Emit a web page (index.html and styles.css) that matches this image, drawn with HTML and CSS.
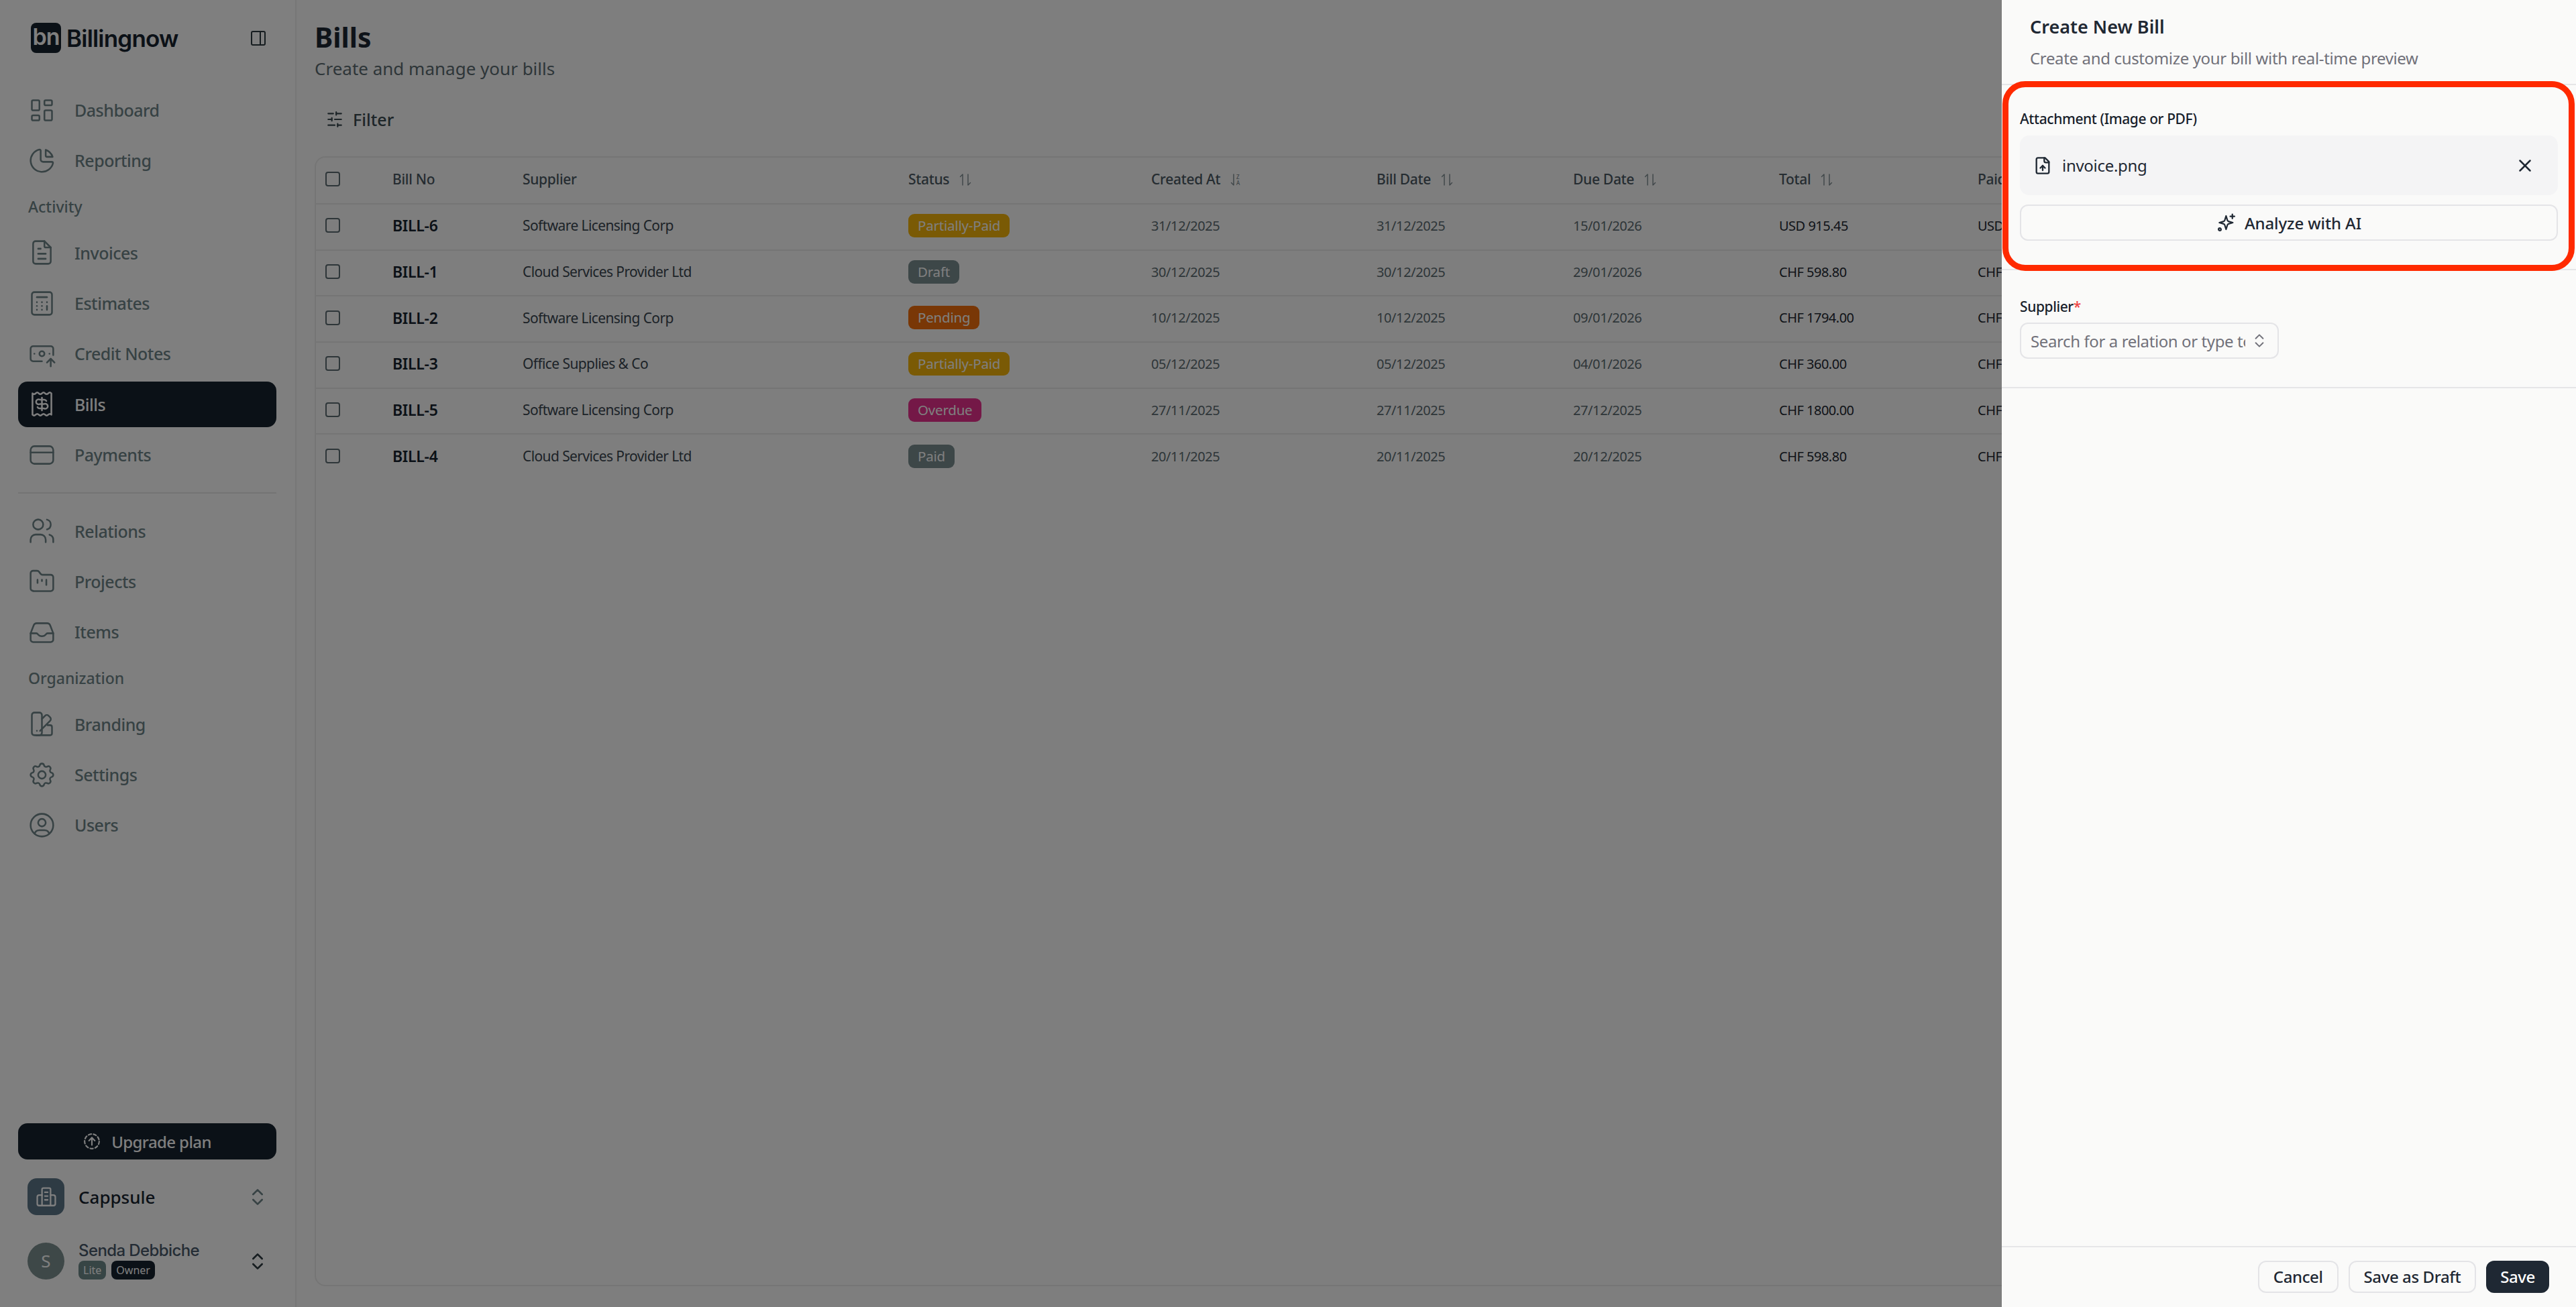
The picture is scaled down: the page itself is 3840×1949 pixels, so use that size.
FILE: index.html
```html
<!DOCTYPE html>
<html>
    <head>
        <title>Bills</title>
        <link rel="stylesheet" href="styles.css">
    </head>
    <body>
        <div class="app">
            <aside class="sidebar">
                <div class="brand">
                    <span class="brand-mark">bn</span>
                    <span class="brand-name">Billingnow</span>
                    <svg class="brand-toggle" viewBox="0 0 22 22"><rect x="1" y="1" width="20" height="20" rx="2"/><path d="M14 1v20"/></svg>
                </div>

                <nav class="nav">
                    <a class="nav-item"><svg class="icon" viewBox="0 0 24 24"><path d="M5 4h4a1 1 0 0 1 1 1v6a1 1 0 0 1 -1 1h-4a1 1 0 0 1 -1 -1v-6a1 1 0 0 1 1 -1"/><path d="M5 16h4a1 1 0 0 1 1 1v2a1 1 0 0 1 -1 1h-4a1 1 0 0 1 -1 -1v-2a1 1 0 0 1 1 -1"/><path d="M15 12h4a1 1 0 0 1 1 1v6a1 1 0 0 1 -1 1h-4a1 1 0 0 1 -1 -1v-6a1 1 0 0 1 1 -1"/><path d="M15 4h4a1 1 0 0 1 1 1v2a1 1 0 0 1 -1 1h-4a1 1 0 0 1 -1 -1v-2a1 1 0 0 1 1 -1"/></svg>Dashboard</a>
                    <a class="nav-item"><svg class="icon" viewBox="0 0 24 24"><path d="M10 3.2a9 9 0 1 0 10.8 10.8a1 1 0 0 0 -1 -1h-6.8a2 2 0 0 1 -2 -2v-7a.9 .9 0 0 0 -1 -.8"/><path d="M15 3.5a9 9 0 0 1 5.5 5.5h-4.5a1 1 0 0 1 -1 -1v-4.5"/></svg>Reporting</a>
                    <div class="nav-label">Activity</div>
                    <a class="nav-item"><svg class="icon" viewBox="0 0 24 24"><path d="M14 3v4a1 1 0 0 0 1 1h4"/><path d="M17 21h-10a2 2 0 0 1 -2 -2v-14a2 2 0 0 1 2 -2h7l5 5v11a2 2 0 0 1 -2 2z"/><path d="M9 9h2"/><path d="M9 13h6"/><path d="M9 17h6"/></svg>Invoices</a>
                    <a class="nav-item"><svg class="icon" viewBox="0 0 24 24"><path d="M4 5a2 2 0 0 1 2 -2h12a2 2 0 0 1 2 2v14a2 2 0 0 1 -2 2h-12a2 2 0 0 1 -2 -2z"/><path d="M8 7h8"/><path d="M8 11v.01"/><path d="M12 11v.01"/><path d="M16 11v.01"/><path d="M8 14v.01"/><path d="M12 14v.01"/><path d="M16 14v3"/><path d="M8 17v.01"/><path d="M12 17v.01"/></svg>Estimates</a>
                    <a class="nav-item"><svg class="icon" viewBox="0 0 24 24"><path d="M12 12m-2 0a2 2 0 1 0 4 0a2 2 0 1 0 -4 0"/><path d="M12 18h-7a2 2 0 0 1 -2 -2v-8a2 2 0 0 1 2 -2h14a2 2 0 0 1 2 2v5"/><path d="M19 22v-6"/><path d="M22 19l-3 -3l-3 3"/><path d="M6 12h.01"/><path d="M18 12h.01"/></svg>Credit Notes</a>
                    <a class="nav-item active"><svg class="icon" viewBox="0 0 24 24"><path d="M4.5 3.5q1.25 1.3 2.5 0t2.5 0t2.5 0t2.5 0t2.5 0t2.5 0v17q-1.25 -1.3 -2.5 0t-2.5 0t-2.5 0t-2.5 0t-2.5 0t-2.5 0z"/><path d="M15.5 9.5a2 2 0 0 0 -1.8 -1h-3.4a2 2 0 1 0 0 3.5h3.4a2 2 0 1 1 0 3.5h-3.4a2 2 0 0 1 -1.8 -1"/><path d="M12 7v10"/></svg>Bills</a>
                    <a class="nav-item"><svg class="icon" viewBox="0 0 24 24"><path d="M3 8a3 3 0 0 1 3 -3h12a3 3 0 0 1 3 3v8a3 3 0 0 1 -3 3h-12a3 3 0 0 1 -3 -3z"/><path d="M3 10h18"/></svg>Payments</a>
                    <div class="nav-divider"></div>
                    <a class="nav-item"><svg class="icon" viewBox="0 0 24 24"><path d="M9 7m-4 0a4 4 0 1 0 8 0a4 4 0 1 0 -8 0"/><path d="M3 21v-2a4 4 0 0 1 4 -4h4a4 4 0 0 1 4 4v2"/><path d="M16 3.13a4 4 0 0 1 0 7.75"/><path d="M21 21v-2a4 4 0 0 0 -3 -3.85"/></svg>Relations</a>
                    <a class="nav-item"><svg class="icon" viewBox="0 0 24 24"><path d="M5 20h14a2 2 0 0 0 2 -2v-9a2 2 0 0 0 -2 -2h-6.5a2 2 0 0 1 -1.6 -.8l-1.2 -1.6a2 2 0 0 0 -1.6 -.8h-3.100a2 2 0 0 0 -2 2v12a2 2 0 0 0 2 2z"/><path d="M8.500 11v2.500"/><path d="M12 11v1"/><path d="M15.500 11v4"/></svg>Projects</a>
                    <a class="nav-item"><svg class="icon" viewBox="0 0 24 24"><path d="M3 13l2.500 -6.500a2.500 2.500 0 0 1 2.300 -1.500h8.400a2.500 2.500 0 0 1 2.300 1.500l2.500 6.500v5a2 2 0 0 1 -2 2h-14a2 2 0 0 1 -2 -2z"/><path d="M3 13h4.500a1.500 1.500 0 0 1 1.200 .7c1.800 2.200 4.800 2.200 6.600 0a1.500 1.500 0 0 1 1.200 -.7h4.500"/></svg>Items</a>
                    <div class="nav-label">Organization</div>
                    <a class="nav-item"><svg class="icon" viewBox="0 0 24 24"><path d="M7 3h3a2 2 0 0 1 2 2v14a2 2 0 0 1 -2 2h-4a2 2 0 0 1 -2 -2v-14a2 2 0 0 1 2 -2z"/><path d="M12 8l2.500 -2.500a2 2 0 0 1 2.800 0l1.200 1.200a2 2 0 0 1 0 2.800l-8 8"/><path d="M16.500 13h2a1.500 1.500 0 0 1 1.500 1.500v5a1.500 1.500 0 0 1 -1.500 1.500h-11"/><path d="M8 17.500v.01"/></svg>Branding</a>
                    <a class="nav-item"><svg class="icon" viewBox="0 0 24 24"><path d="M10.325 4.317c.426 -1.756 2.924 -1.756 3.35 0a1.724 1.724 0 0 0 2.573 1.066c1.543 -.94 3.31 .826 2.37 2.37a1.724 1.724 0 0 0 1.065 2.572c1.756 .426 1.756 2.924 0 3.35a1.724 1.724 0 0 0 -1.066 2.573c.94 1.543 -.826 3.31 -2.37 2.37a1.724 1.724 0 0 0 -2.572 1.065c-.426 1.756 -2.924 1.756 -3.35 0a1.724 1.724 0 0 0 -2.573 -1.066c-1.543 .94 -3.31 -.826 -2.37 -2.37a1.724 1.724 0 0 0 -1.065 -2.572c-1.756 -.426 -1.756 -2.924 0 -3.35a1.724 1.724 0 0 0 1.066 -2.573c-.94 -1.543 .826 -3.31 2.37 -2.37c1 .608 2.296 .07 2.572 -1.065z"/><path d="M9 12a3 3 0 1 0 6 0a3 3 0 0 0 -6 0"/></svg>Settings</a>
                    <a class="nav-item"><svg class="icon" viewBox="0 0 24 24"><path d="M12 12m-9 0a9 9 0 1 0 18 0a9 9 0 1 0 -18 0"/><path d="M12 10m-3 0a3 3 0 1 0 6 0a3 3 0 1 0 -6 0"/><path d="M6.168 18.849a4 4 0 0 1 3.832 -2.849h4a4 4 0 0 1 3.834 2.855"/></svg>Users</a>
                </nav>

                <div class="side-footer">
                    <a class="upgrade"><svg class="upgrade-icon" viewBox="0 0 24 24"><circle class="dashed" cx="12" cy="12" r="10"/><path d="M12 17v-10"/><path d="M8 11l4 -4l4 4"/></svg>Upgrade plan</a>
                    <div class="account org">
                        <span class="org-mark"><svg viewBox="0 0 24 24"><path d="M7.500 21v-17a1.500 1.500 0 0 1 1.500 -1.500h6a1.500 1.500 0 0 1 1.500 1.500v17z"/><path d="M7.500 10h-3a2 2 0 0 0 -2 2v7a2 2 0 0 0 2 2h3"/><path d="M16.500 10h3a2 2 0 0 1 2 2v7a2 2 0 0 1 -2 2h-3"/><path d="M10.500 7h3"/><path d="M10.500 11h3"/><path d="M10.500 15h3"/></svg></span>
                        <span class="org-name">Cappsule</span>
                        <svg class="updown" viewBox="0 0 24 24"><path d="M7 15l5 5l5 -5"/><path d="M7 9l5 -5l5 5"/></svg>
                    </div>
                    <div class="account user">
                        <span class="avatar">S</span>
                        <div class="user-info">
                            <div class="user-name">Senda Debbiche</div>
                            <div class="user-tags"><span class="tag tag-lite">Lite</span><span class="tag tag-owner">Owner</span></div>
                        </div>
                        <svg class="updown" viewBox="0 0 24 24"><path d="M7 15l5 5l5 -5"/><path d="M7 9l5 -5l5 5"/></svg>
                    </div>
                </div>
            </aside>

            <main class="main">
                <h1 class="page-title">Bills</h1>
                <p class="page-sub">Create and manage your bills</p>
                <a class="filter"><svg viewBox="0 0 24 24"><path d="M21 4h-7"/><path d="M10 4h-7"/><path d="M21 12h-9"/><path d="M8 12h-5"/><path d="M21 20h-5"/><path d="M12 20h-9"/><path d="M14 2v4"/><path d="M8 10v4"/><path d="M16 18v4"/></svg>Filter</a>

                <div class="table-card">
                    <table class="bills">
                        <thead>
                            <tr>
                                <th class="col-check"><span class="check"></span></th>
                                <th class="col-no">Bill No</th>
                                <th class="col-supplier">Supplier</th>
                                <th class="col-status">Status<svg class="sort" viewBox="0 0 20 20"><path d="M6 18v-16l-3.500 3.500"/><path d="M14 2v16l3.500 -3.500"/></svg></th>
                                <th class="col-created">Created At<svg class="sort" viewBox="0 0 20 20"><path d="M6 2v16l-3.500 -3.500"/><text class="sort-letter" x="10" y="9">Z</text><text class="sort-letter" x="10" y="18">A</text></svg></th>
                                <th class="col-date">Bill Date<svg class="sort" viewBox="0 0 20 20"><path d="M6 18v-16l-3.500 3.500"/><path d="M14 2v16l3.500 -3.500"/></svg></th>
                                <th class="col-due">Due Date<svg class="sort" viewBox="0 0 20 20"><path d="M6 18v-16l-3.500 3.500"/><path d="M14 2v16l3.500 -3.500"/></svg></th>
                                <th class="col-total">Total<svg class="sort" viewBox="0 0 20 20"><path d="M6 18v-16l-3.500 3.500"/><path d="M14 2v16l3.500 -3.500"/></svg></th>
                                <th>Paid</th>
                            </tr>
                        </thead>
                        <tbody>
                            <tr>
                                <td><span class="check"></span></td>
                                <td class="bill-no">BILL-6</td>
                                <td class="supplier">Software Licensing Corp</td>
                                <td><span class="badge partial">Partially-Paid</span></td>
                                <td class="date">31/12/2025</td>
                                <td class="date">31/12/2025</td>
                                <td class="date">15/01/2026</td>
                                <td class="money">USD 915.45</td>
                                <td class="money">USD 300.00</td>
                            </tr>
                            <tr>
                                <td><span class="check"></span></td>
                                <td class="bill-no">BILL-1</td>
                                <td class="supplier">Cloud Services Provider Ltd</td>
                                <td><span class="badge muted">Draft</span></td>
                                <td class="date">30/12/2025</td>
                                <td class="date">30/12/2025</td>
                                <td class="date">29/01/2026</td>
                                <td class="money">CHF 598.80</td>
                                <td class="money">CHF 0.00</td>
                            </tr>
                            <tr>
                                <td><span class="check"></span></td>
                                <td class="bill-no">BILL-2</td>
                                <td class="supplier">Software Licensing Corp</td>
                                <td><span class="badge pending">Pending</span></td>
                                <td class="date">10/12/2025</td>
                                <td class="date">10/12/2025</td>
                                <td class="date">09/01/2026</td>
                                <td class="money">CHF 1794.00</td>
                                <td class="money">CHF 0.00</td>
                            </tr>
                            <tr>
                                <td><span class="check"></span></td>
                                <td class="bill-no">BILL-3</td>
                                <td class="supplier">Office Supplies &amp; Co</td>
                                <td><span class="badge partial">Partially-Paid</span></td>
                                <td class="date">05/12/2025</td>
                                <td class="date">05/12/2025</td>
                                <td class="date">04/01/2026</td>
                                <td class="money">CHF 360.00</td>
                                <td class="money">CHF 100.00</td>
                            </tr>
                            <tr>
                                <td><span class="check"></span></td>
                                <td class="bill-no">BILL-5</td>
                                <td class="supplier">Software Licensing Corp</td>
                                <td><span class="badge overdue">Overdue</span></td>
                                <td class="date">27/11/2025</td>
                                <td class="date">27/11/2025</td>
                                <td class="date">27/12/2025</td>
                                <td class="money">CHF 1800.00</td>
                                <td class="money">CHF 0.00</td>
                            </tr>
                            <tr>
                                <td><span class="check"></span></td>
                                <td class="bill-no">BILL-4</td>
                                <td class="supplier">Cloud Services Provider Ltd</td>
                                <td><span class="badge muted">Paid</span></td>
                                <td class="date">20/11/2025</td>
                                <td class="date">20/11/2025</td>
                                <td class="date">20/12/2025</td>
                                <td class="money">CHF 598.80</td>
                                <td class="money">CHF 598.80</td>
                            </tr>
                        </tbody>
                    </table>
                </div>
            </main>
        </div>

        <div class="backdrop"></div>

        <aside class="panel">
            <header class="panel-head">
                <h2>Create New Bill</h2>
                <p>Create and customize your bill with real-time preview</p>
            </header>

            <section class="panel-section attach">
                <div class="field-label">Attachment (Image or PDF)</div>
                <div class="file-row">
                    <svg class="file-icon" viewBox="0 0 24 24"><path d="M15 2h-9a2 2 0 0 0 -2 2v16a2 2 0 0 0 2 2h12a2 2 0 0 0 2 -2v-13z"/><path d="M14 2v4a2 2 0 0 0 2 2h4"/><path d="M12 18v-6"/><path d="M9 15l3 -3l3 3"/></svg>
                    <span class="file-name">invoice.png</span>
                    <svg class="file-remove" viewBox="0 0 24 24"><path d="M18 6l-12 12"/><path d="M6 6l12 12"/></svg>
                </div>
                <a class="analyze"><svg viewBox="0 0 24 24"><path d="M9.500 5l1.600 5.200a2 2 0 0 0 1.300 1.300l5.100 1.500l-5.100 1.500a2 2 0 0 0 -1.300 1.300l-1.600 5.200l-1.600 -5.200a2 2 0 0 0 -1.300 -1.300l-5.100 -1.500l5.100 -1.500a2 2 0 0 0 1.300 -1.300z" transform="translate(2 -1)"/><path d="M19 2v5"/><path d="M16.500 4.500h5"/><circle cx="4" cy="20" r="1.500"/></svg>Analyze with AI</a>
            </section>

            <section class="panel-section supplier-field">
                <div class="field-label">Supplier<span class="req">*</span></div>
                <div class="combo">
                    <span class="combo-text">Search for a relation or type to create</span>
                    <svg viewBox="0 0 24 24"><path d="M7 15l5 5l5 -5"/><path d="M7 9l5 -5l5 5"/></svg>
                </div>
            </section>

            <footer class="panel-foot">
                <a class="btn">Cancel</a>
                <a class="btn">Save as Draft</a>
                <a class="btn btn-dark">Save</a>
            </footer>
        </aside>

        <div class="callout"></div>
    </body>
</html>
```

FILE: styles.css
```css
* {
    box-sizing: border-box;
}

html, body {
    height: 100%;
}

body {
    background: #fcfcfc;
    color: #1f2833;
    font-family: "Noto Sans", "Open Sans", sans-serif;
    margin: 0;
    overflow: hidden;
}

svg {
    fill: none;
    stroke: currentColor;
    stroke-linecap: round;
    stroke-linejoin: round;
}

.app {
    display: flex;
    height: 100%;
}

/* sidebar */

.sidebar {
    background: #fff;
    border-right: 2px solid #eeeeee;
    display: flex;
    flex: 0 0 442px;
    flex-direction: column;
    padding: 34px 28px 41px 27px;
}

.brand {
    align-items: center;
    display: flex;
    height: 45px;
    padding-left: 19px;
}

.brand-mark {
    background: #16222e;
    border-radius: 8px;
    color: #fff;
    display: block;
    font-family: "Inter", sans-serif;
    font-size: 34px;
    font-weight: 600;
    height: 45px;
    letter-spacing: -1px;
    line-height: 42px;
    text-align: center;
    width: 45px;
}

.brand-name {
    color: #16222e;
    font-family: "Inter", sans-serif;
    font-size: 35px;
    font-weight: 600;
    letter-spacing: -.8px;
    margin-left: 8px;
}

.brand-toggle {
    color: #2d3a40;
    height: 22px;
    margin-left: auto;
    margin-right: 16px;
    stroke-width: 2;
    width: 22px;
}

.nav {
    display: flex;
    flex-direction: column;
    gap: 7.300px;
    margin-top: 51px;
}

.nav-item {
    align-items: center;
    border-radius: 14px;
    color: #6f8589;
    display: flex;
    flex: 0 0 68px;
    font-size: 25px;
    font-weight: 500;
    height: 68px;
    letter-spacing: -.5px;
    padding-left: 13px;
}

.nav-item .icon {
    flex: 0 0 45px;
    height: 45px;
    margin-right: 26px;
    stroke-width: 1.350;
    width: 45px;
}

.nav-item.active {
    background: #16222e;
    color: #fff;
}

.nav-label {
    align-items: center;
    color: #6f8589;
    display: flex;
    flex: 0 0 55px;
    font-size: 23px;
    font-weight: 500;
    padding-left: 15px;
}

.nav-divider {
    background: #e8e8e8;
    flex: 0 0 2px;
    margin: 15px 0 14px;
}

.side-footer {
    display: flex;
    flex-direction: column;
    margin-top: auto;
}

.upgrade {
    align-items: center;
    background: #16222e;
    border-radius: 14px;
    color: #fff;
    display: flex;
    font-size: 24px;
    font-weight: 500;
    gap: 16px;
    height: 54px;
    justify-content: center;
    letter-spacing: -.6px;
}

.upgrade-icon {
    height: 26px;
    stroke-width: 2;
    width: 26px;
}

.dashed {
    stroke-dasharray: 4 3;
}

.account {
    align-items: center;
    display: flex;
    height: 55px;
    padding-left: 14px;
}

.org {
    margin-top: 28px;
}

.user {
    margin-top: 41px;
}

.org-mark {
    align-items: center;
    background: #5c7689;
    border-radius: 14px;
    color: #fff;
    display: flex;
    flex: 0 0 55px;
    height: 55px;
    justify-content: center;
}

.org-mark svg {
    height: 34px;
    stroke-width: 1.600;
    width: 34px;
}

.org-name {
    color: #16222e;
    font-size: 26px;
    font-weight: 500;
    margin-left: 21px;
}

.updown {
    color: #6f8589;
    height: 32px;
    margin-left: auto;
    margin-right: 12px;
    stroke-width: 2;
    width: 32px;
}

.user .updown {
    color: #2d3a40;
}

.avatar {
    background: #7d9090;
    border-radius: 50%;
    color: #fff;
    flex: 0 0 55px;
    font-size: 26px;
    height: 55px;
    line-height: 55px;
    text-align: center;
}

.user-info {
    margin-left: 21px;
}

.user-name {
    color: #48586a;
    font-family: "Inter", sans-serif;
    font-size: 24px;
    font-weight: 500;
    letter-spacing: -.6px;
    line-height: 30px;
    margin-top: -3px;
}

.user-tags {
    display: flex;
    gap: 8px;
}

.tag {
    border-radius: 8px;
    color: #fff;
    font-size: 16px;
    height: 28px;
    line-height: 28px;
    padding: 0 7px;
}

.tag-lite {
    background: #6f8a8a;
}

.tag-owner {
    background: #16222e;
}

/* main */

.main {
    display: flex;
    flex: 1;
    flex-direction: column;
    min-width: 0;
    padding: 30px 28px 31px 27px;
}

.page-title {
    color: #1c2733;
    font-size: 41px;
    font-weight: 700;
    line-height: 50px;
    margin: 0;
}

.page-sub {
    color: #5d6c72;
    font-size: 26px;
    line-height: 40px;
    margin: 2px 0 0;
}

.filter {
    align-items: center;
    color: #3b4a50;
    display: flex;
    font-size: 25px;
    font-weight: 500;
    gap: 14px;
    height: 46px;
    margin-top: 33px;
    padding-left: 17px;
    width: 134px;
}

.filter svg {
    height: 26px;
    stroke-width: 2;
    width: 26px;
}

.table-card {
    border: 2px solid #ebebeb;
    border-radius: 16px;
    flex: 1;
    margin-top: 32px;
    overflow: hidden;
}

.bills {
    border-collapse: collapse;
    table-layout: fixed;
    width: 100%;
}

.bills th, .bills td {
    border-bottom: 2px solid #ebebeb;
    padding: 0 14px 4px;
    text-align: left;
    white-space: nowrap;
}

.bills tbody tr:last-child td {
    border-bottom: 0;
}

.bills th {
    color: #4a5862;
    font-size: 21px;
    font-weight: 500;
    height: 69px;
    letter-spacing: -.3px;
}

.bills td {
    font-size: 21px;
    height: 68.700px;
}

.col-check { width: 100px; }
.col-no { width: 194px; }
.col-supplier { width: 575px; }
.col-status { width: 362px; }
.col-created { width: 336px; }
.col-date { width: 293px; }
.col-due { width: 307px; }
.col-total { width: 296px; }

.check {
    border: 2px solid #5d6c72;
    border-radius: 4px;
    display: block;
    height: 22px;
    width: 22px;
}

.sort {
    color: #7c8a90;
    height: 20px;
    margin-left: 14px;
    stroke-width: 1.400;
    vertical-align: -3px;
    width: 20px;
}

.sort-letter {
    fill: currentColor;
    font-size: 8px;
    stroke: none;
}

.bills .bill-no {
    color: #16222e;
    font-size: 23px;
    font-weight: 600;
    letter-spacing: -.3px;
}

.bills .supplier {
    color: #3a4650;
    letter-spacing: -.6px;
}

.bills .date {
    color: #5d6c72;
    font-size: 20px;
    letter-spacing: -.4px;
}

.bills .money {
    color: #1f2833;
    font-size: 20px;
    letter-spacing: -.5px;
}

.badge {
    border-radius: 9px;
    color: #fff;
    display: inline-block;
    font-size: 20.500px;
    height: 35px;
    letter-spacing: -.2px;
    line-height: 34px;
    padding: 0 14px;
}

.partial { background: #f4b40a; }
.muted { background: #7b8e91; }
.pending { background: #f26f0c; }
.overdue { background: #e8318e; }

/* slide-over */

.backdrop {
    background: rgba(0, 0, 0, .5);
    inset: 0;
    position: fixed;
}

.panel {
    background: #fafaf9;
    bottom: 0;
    display: flex;
    flex-direction: column;
    position: fixed;
    right: 0;
    top: 0;
    width: 856px;
}

.panel-head {
    border-bottom: 2px solid #e6e6e8;
    flex: 0 0 127px;
    padding: 22px 42px 0;
}

.panel-head h2 {
    color: #1f2833;
    font-size: 27px;
    font-weight: 600;
    line-height: 36px;
    margin: 0;
}

.panel-head p {
    color: #71717a;
    font-size: 24px;
    letter-spacing: -.35px;
    line-height: 32px;
    margin: 13px 0 0;
}

.panel-section {
    border-bottom: 2px solid #e6e6e8;
    padding: 0 27px;
}

.attach {
    flex: 0 0 276px;
    padding-top: 36px;
}

.supplier-field {
    flex: 0 0 176px;
    padding-top: 40px;
}

.field-label {
    color: #18212b;
    font-size: 21px;
    font-weight: 500;
    letter-spacing: -.4px;
    line-height: 28px;
}

.req {
    color: #ef4444;
}

.file-row {
    align-items: center;
    background: #f4f4f5;
    border-radius: 14px;
    display: flex;
    height: 89px;
    margin-top: 11px;
    padding: 0 34px 0 20px;
}

.file-icon {
    height: 28px;
    stroke-width: 2;
    width: 28px;
}

.file-name {
    font-size: 24px;
    letter-spacing: -.3px;
    margin-left: 15px;
}

.file-remove {
    height: 30px;
    margin-left: auto;
    stroke-width: 2;
    width: 30px;
}

.analyze {
    align-items: center;
    border: 2px solid #e4e4e7;
    border-radius: 12px;
    display: flex;
    font-size: 24px;
    font-weight: 500;
    gap: 12px;
    height: 54px;
    justify-content: center;
    letter-spacing: -.1px;
    margin-top: 14px;
}

.analyze svg {
    height: 30px;
    stroke-width: 1.800;
    width: 30px;
}

.combo {
    align-items: center;
    border: 2px solid #e4e4e7;
    border-radius: 12px;
    color: #71717a;
    display: flex;
    font-size: 24px;
    height: 54px;
    letter-spacing: -.4px;
    margin-top: 10px;
    padding: 0 14px;
    width: 386px;
}

.combo-text {
    flex: 1;
    overflow: hidden;
    white-space: nowrap;
}

.combo svg {
    flex: 0 0 26px;
    height: 26px;
    margin-left: 8px;
    stroke-width: 1.800;
}

.panel-foot {
    align-items: center;
    border-top: 2px solid #e6e6e8;
    display: flex;
    gap: 15px;
    height: 91px;
    justify-content: flex-end;
    margin-top: auto;
    padding: 0 40px 2px 0;
}

.btn {
    border: 2px solid #e4e4e7;
    border-radius: 12px;
    font-size: 24px;
    font-weight: 500;
    height: 48px;
    letter-spacing: -.4px;
    line-height: 43px;
    padding: 0 21px;
}

.btn-dark {
    background: #1f2833;
    border-color: #1f2833;
    color: #fff;
    padding: 0 19px;
}

/* the red marker drawn on top of the screenshot */

.callout {
    border: 9px solid #ff2a00;
    border-radius: 34px;
    height: 283px;
    left: 2985px;
    position: fixed;
    top: 121px;
    width: 853px;
}
```
